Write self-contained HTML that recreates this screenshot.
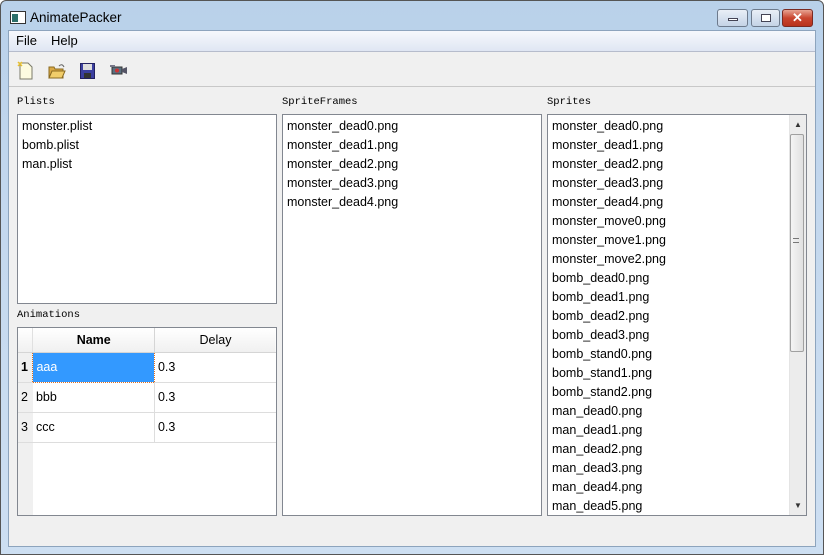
<!DOCTYPE html>
<html><head><style>
*{margin:0;padding:0;box-sizing:border-box}
body{width:824px;height:555px;overflow:hidden;background:#fff;font-family:"Liberation Sans",sans-serif;position:relative}
.abs{position:absolute}
.frame{left:0;top:0;width:824px;height:555px;background:linear-gradient(#b9d1ea,#c4d8ee 40%,#cddff2);border:1px solid #555;border-radius:6px 6px 0 0}
.title{left:30px;top:10px;font-size:13.5px;color:#000}
.client{left:8px;top:30px;width:808px;height:517px;background:#f0f0f0;border:1px solid #8da4bd}
.menu{left:9px;top:31px;width:806px;height:21px;background:linear-gradient(#f6f8fc,#dfe6f3);border-bottom:1px solid #b6bccc;font-size:13px}
.menu span{position:absolute;top:2px}
.tb{left:9px;top:86px;width:806px;height:1px;background:#c8c8c8}
.lbl{font-family:"Liberation Mono",monospace;font-size:10.5px;color:#000}
.box{background:#fff;border:1px solid #828790}
.list{font-size:12.5px;line-height:19px;padding:2px 0 0 4px;color:#000}
.btn{top:9px;height:18px;border:1px solid #6d7a8c;border-radius:3px;background:linear-gradient(#e9eff7,#c4d3e6)}
table{border-collapse:collapse;font-size:12.5px}
</style></head><body>
<div class="abs frame"></div>
<svg class="abs" style="left:10px;top:11px" width="16" height="14"><rect x="0.5" y="0.5" width="15" height="12" fill="#fff" stroke="#333"/><rect x="2" y="3" width="6" height="8" fill="#2b6f6a"/></svg>
<div class="abs title">AnimatePacker</div>
<div class="abs btn" style="left:717px;width:31px"><div class="abs" style="left:10px;top:8px;width:10px;height:3px;background:#fff;border:1px solid #445"></div></div>
<div class="abs btn" style="left:751px;width:29px"><div class="abs" style="left:9px;top:4px;width:10px;height:8px;background:#fff;border:1px solid #445"></div></div>
<div class="abs btn" style="left:782px;width:31px;border-color:#7a2a22;background:linear-gradient(#e8a493,#c9452f 50%,#b8321c)"><div class="abs" style="left:9px;top:0px;color:#fff;font-weight:bold;font-size:13px">✕</div></div>
<div class="abs client"></div>
<div class="abs menu"><span style="left:7px">File</span><span style="left:42px">Help</span></div>
<svg class="abs" style="left:17px;top:61px" width="120" height="20">
<path d="M3 2h8l4 4v12H3z" fill="#fdfbe0" stroke="#7a7a6a"/><path d="M1 1l4 4M5 1L1 5" stroke="#e8c030" stroke-width="1.5"/>
<path d="M32 6h5l1 2h8v9H32z" fill="#d9a845" stroke="#8a6a20"/><path d="M32 17l3-7h13l-3 7z" fill="#f1cd6a" stroke="#8a6a20"/><path d="M42 5q3-3 5 1" stroke="#666" fill="none"/>
<rect x="63.5" y="2.5" width="14" height="15" fill="#3b3fa0" stroke="#222060"/><rect x="66" y="3" width="9" height="6" fill="#ddd"/><rect x="67" y="12" width="7" height="5" fill="#333"/>
<rect x="95" y="6" width="10" height="7" fill="#5a7080" stroke="#333"/><path d="M105 8l5-2v7l-5-2z" fill="#556"/><circle cx="100" cy="9.5" r="2" fill="#c33"/><rect x="93" y="4" width="5" height="2" fill="#778"/>
</svg>
<div class="abs tb"></div>
<div class="abs lbl" style="left:17px;top:96px">Plists</div>
<div class="abs lbl" style="left:282px;top:96px">SpriteFrames</div>
<div class="abs lbl" style="left:547px;top:96px">Sprites</div>
<div class="abs lbl" style="left:17px;top:309px">Animations</div>
<div class="abs box list" style="left:17px;top:114px;width:260px;height:190px">monster.plist<br>bomb.plist<br>man.plist</div>
<div class="abs box list" style="left:282px;top:114px;width:260px;height:402px">monster_dead0.png<br>monster_dead1.png<br>monster_dead2.png<br>monster_dead3.png<br>monster_dead4.png</div>
<div class="abs box list" style="left:547px;top:114px;width:260px;height:402px">monster_dead0.png<br>monster_dead1.png<br>monster_dead2.png<br>monster_dead3.png<br>monster_dead4.png<br>monster_move0.png<br>monster_move1.png<br>monster_move2.png<br>bomb_dead0.png<br>bomb_dead1.png<br>bomb_dead2.png<br>bomb_dead3.png<br>bomb_stand0.png<br>bomb_stand1.png<br>bomb_stand2.png<br>man_dead0.png<br>man_dead1.png<br>man_dead2.png<br>man_dead3.png<br>man_dead4.png<br>man_dead5.png</div>
<div class="abs" style="left:789px;top:115px;width:17px;height:400px;background:#ececec;border-left:1px solid #e4e4e4"></div>
<div class="abs" style="left:790px;top:134px;width:14px;height:218px;background:linear-gradient(90deg,#f4f4f4,#e0e0e0);border:1px solid #a0a0a0;border-radius:2px"></div>
<div class="abs" style="left:794px;top:120px;font-size:8px;color:#333">▲</div>
<div class="abs" style="left:794px;top:501px;font-size:8px;color:#333">▼</div>
<div class="abs" style="left:793px;top:238px;width:6px;height:5px;border-top:1px solid #777;border-bottom:1px solid #777"></div>
<div class="abs box" style="left:17px;top:327px;width:260px;height:189px;overflow:hidden">
<table>
<tr style="height:24px;background:linear-gradient(#fff,#f0f0f0)"><td style="width:15px;border-right:1px solid #e0e0e0;border-bottom:1px solid #d5d5d5"></td><td style="width:122px;text-align:center;font-weight:bold;border-right:1px solid #d5d5d5;border-bottom:1px solid #d5d5d5">Name</td><td style="width:122px;text-align:center;border-bottom:1px solid #d5d5d5">Delay</td></tr>
<tr style="height:30px"><td style="background:#f0f0f0;font-weight:bold;padding-left:3px;border-bottom:1px solid #ddd">1</td><td style="background:#3399ff;color:#fff;padding-left:3px;border:1px dotted #e07020">aaa</td><td style="padding-left:3px;border-bottom:1px solid #ddd">0.3</td></tr>
<tr style="height:30px"><td style="background:#f0f0f0;padding-left:3px;border-bottom:1px solid #ddd">2</td><td style="padding-left:3px;border-right:1px solid #ddd;border-bottom:1px solid #ddd">bbb</td><td style="padding-left:3px;border-bottom:1px solid #ddd">0.3</td></tr>
<tr style="height:30px"><td style="background:#f0f0f0;padding-left:3px;border-bottom:1px solid #ddd">3</td><td style="padding-left:3px;border-right:1px solid #ddd;border-bottom:1px solid #ddd">ccc</td><td style="padding-left:3px;border-bottom:1px solid #ddd">0.3</td></tr>
<tr style="height:80px"><td style="background:#f0f0f0"></td><td></td><td></td></tr>
</table></div>
</body></html>
